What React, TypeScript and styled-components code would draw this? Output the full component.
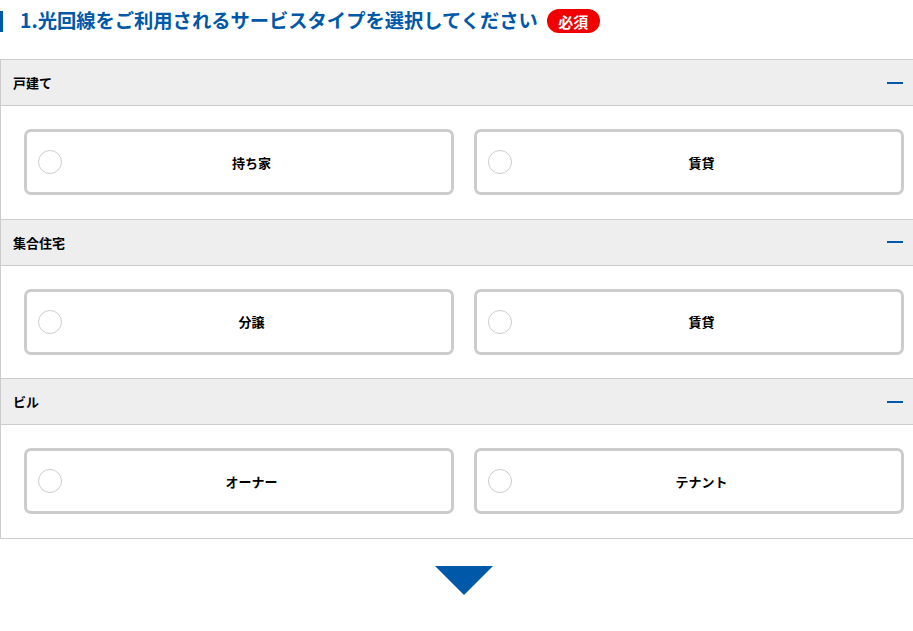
import React from "react";
import styled, { createGlobalStyle } from "styled-components";

const GlobalStyle = createGlobalStyle`
  html, body {
    margin: 0;
    padding: 0;
    background: #fff;
    overflow-x: hidden;
  }
  body {
    font-family: "Noto Sans CJK JP", "Noto Sans", sans-serif;
    color: #000;
  }
`;

const Page = styled.div`
  width: 928px;
`;

const TitleRow = styled.div`
  display: flex;
  align-items: center;
  height: 42px;
  padding-bottom: 17px;
  box-sizing: content-box;
`;

const Title = styled.h2`
  margin: 0;
  display: flex;
  align-items: center;
  height: 21px;
  padding-left: 17px;
  border-left: 3px solid #0058a8;
  color: #0058a8;
  font-size: 19.3px;
  font-weight: 700;
  line-height: 1;
`;

const Badge = styled.span`
  display: inline-flex;
  align-items: center;
  justify-content: center;
  height: 24px;
  margin-left: 9px;
  padding: 0 11.5px;
  border-radius: 12px;
  background: #f00000;
  color: #fff;
  font-size: 15px;
  font-weight: 700;
`;

const Panel = styled.div`
  border: 1px solid #ccc;
  border-top: none;
`;

const Section = styled.section``;

const SectionHeader = styled.div`
  display: flex;
  align-items: center;
  justify-content: space-between;
  height: 45px;
  padding: 0 24px 0 12px;
  background: #eee;
  border-top: 1px solid #ccc;
  border-bottom: 1px solid #ccc;
  font-size: 13px;
  font-weight: 700;
`;

const Minus = styled.span`
  display: block;
  width: 16px;
  height: 2px;
  background: #0058a8;
`;

const Options = styled.div`
  display: grid;
  grid-template-columns: 1fr 1fr;
  gap: 20px;
  padding: 23px 23px 23.5px;
`;

const Option = styled.label`
  position: relative;
  display: flex;
  align-items: center;
  justify-content: center;
  height: 66px;
  box-sizing: border-box;
  padding-left: 25px;
  border: 3px solid #ccc;
  border-radius: 7px;
  background: #fff;
  font-size: 13px;
  font-weight: 700;
  cursor: pointer;
`;

const Radio = styled.span`
  position: absolute;
  left: 11px;
  top: 50%;
  width: 24px;
  height: 24px;
  margin-top: -12px;
  box-sizing: border-box;
  border: 1px solid #ccc;
  border-radius: 50%;
  background: #fff;
`;

const ArrowRow = styled.div`
  display: flex;
  justify-content: center;
  padding-top: 27px;
`;

const Arrow = styled.span`
  width: 0;
  height: 0;
  border-left: 29px solid transparent;
  border-right: 29px solid transparent;
  border-top: 29px solid #0058a8;
`;

const sections = [
  { name: "戸建て", options: ["持ち家", "賃貸"] },
  { name: "集合住宅", options: ["分譲", "賃貸"] },
  { name: "ビル", options: ["オーナー", "テナント"] },
];

export default function App() {
  return (
    <Page>
      <GlobalStyle />
      <TitleRow>
        <Title>1.光回線をご利用されるサービスタイプを選択してください</Title>
        <Badge>必須</Badge>
      </TitleRow>
      <Panel>
        {sections.map((s) => (
          <Section key={s.name}>
            <SectionHeader>
              <span>{s.name}</span>
              <Minus />
            </SectionHeader>
            <Options>
              {s.options.map((o) => (
                <Option key={o}>
                  <Radio />
                  {o}
                </Option>
              ))}
            </Options>
          </Section>
        ))}
      </Panel>
      <ArrowRow>
        <Arrow />
      </ArrowRow>
    </Page>
  );
}
